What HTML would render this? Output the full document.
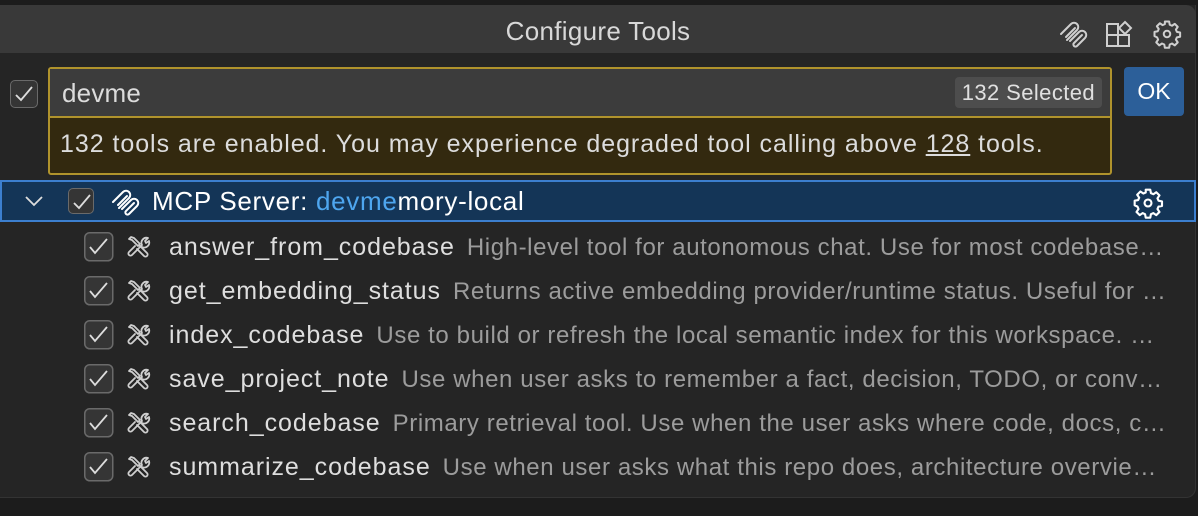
<!DOCTYPE html>
<html><head><style>
body{margin:0;width:1198px;height:516px;background:#1c1c1c;font-family:"Liberation Sans",sans-serif;overflow:hidden;position:relative}
.panel{position:absolute;left:0;top:5px;width:1195px;height:492px;background:#252525;border-radius:0 0 10px 0;border-right:1px solid #333;border-bottom:1px solid #333}
.title{position:absolute;left:0;top:5px;width:1196px;height:48px;background:#393939;border-radius:0 10px 0 0}
.title span{position:absolute;left:0;width:1196px;text-align:center;top:11px;color:#d8d8d8;font-size:26px;letter-spacing:0.3px}
.ab{position:absolute;color:#cfcfcf}
.cb{position:absolute;width:26px;height:26px;border:1.5px solid #6a6a6a;border-radius:5px;background:#353535;box-sizing:border-box}
.cb svg{position:absolute;left:3px;top:4px}
.input{position:absolute;left:48px;top:67px;width:1064px;height:108px;border:2px solid #b0932c;box-sizing:border-box;border-radius:3px;background:#33290f}
.inp{position:absolute;left:0;top:0;right:0;height:47px;background:#3c3c3c;border-bottom:2px solid #b0932c}
.inp .t{position:absolute;left:12px;top:9px;font-size:26px;letter-spacing:0.2px;color:#dcdcdc}
.badge{position:absolute;right:8px;top:8px;height:31px;background:#4d4d4d;border-radius:4px;color:#e0e0e0;font-size:22px;letter-spacing:0.4px;line-height:31px;padding:0 7px}
.warn{position:absolute;left:10px;top:61px;font-size:25px;letter-spacing:0.95px;color:#dcdcdc;white-space:nowrap}
.ok{position:absolute;left:1124px;top:67px;width:60px;height:49px;background:#2c5f99;border-radius:4px;color:#fff;font-size:23px;text-align:center;line-height:49px}
.sel{position:absolute;left:0;top:180px;width:1196px;height:42px;background:#143557;border:2px solid #3c7fcf;box-sizing:border-box}
.row{position:absolute;left:0;width:1170px;height:44px;white-space:nowrap;overflow:hidden;text-overflow:ellipsis;font-size:24px;letter-spacing:0.6px;line-height:44px;padding-left:169px;box-sizing:border-box;color:#9c9c9c}
.row b{font-weight:normal;color:#dedede;margin-right:12px;font-size:25px;letter-spacing:0.95px}
</style></head><body>
<div class="panel"></div>
<div class="title"><span>Configure Tools</span>
<svg class="ab" style="left:1057px;top:13px" width="32" height="32" viewBox="0 0 32 32" fill="none" stroke="#cfcfcf" stroke-width="2" stroke-linecap="round" stroke-linejoin="round"><path d="M4 16 L14 6 a4 4 0 0 1 6 6 L10 22 M9 19 L18 10 M13 23 L22 14 a4 4 0 0 1 6 6 L20 28 a2 2 0 0 1 -3 -3 L25 17"/></svg>
<svg class="ab" style="left:1104px;top:14px" width="32" height="32" viewBox="0 0 32 32" fill="none" stroke="#cfcfcf" stroke-width="2"><rect x="3" y="5" width="11" height="11"/><rect x="3" y="16" width="11" height="11"/><rect x="14" y="16" width="11" height="11"/><path d="M21 3 L27 9 L21 15 L15 9 Z"/></svg>
<svg class="ab" style="left:1152px;top:14px" width="30" height="30" viewBox="0 0 24 24" fill="none" stroke="#cfcfcf" stroke-width="1.6" stroke-linejoin="round"><path d="M10.3 2h3.4l.5 2.6 1.8.8 2.2-1.5 2.4 2.4-1.5 2.2.8 1.8 2.6.5v3.4l-2.6.5-.8 1.8 1.5 2.2-2.4 2.4-2.2-1.5-1.8.8-.5 2.6h-3.4l-.5-2.6-1.8-.8-2.2 1.5-2.4-2.4 1.5-2.2-.8-1.8L2 13.7v-3.4l2.6-.5.8-1.8-1.5-2.2 2.4-2.4 2.2 1.5 1.8-.8z"/><circle cx="12" cy="12" r="2.6"/></svg>
</div>
<div class="cb" style="left:10px;top:80px;width:28px;height:28px"><svg width="20" height="18" viewBox="0 0 20 18"><path d="M2 10 L7 15 L18 2" fill="none" stroke="#ddd" stroke-width="1.8"/></svg></div>
<div class="input"><div class="inp"><span class="t">devme</span><span class="badge">132 Selected</span></div>
<div class="warn">132 tools are enabled. You may experience degraded tool calling above <u>128</u> tools.</div></div>
<div class="ok">OK</div>
<div class="sel"></div>
<svg style="position:absolute;left:24px;top:194px" width="20" height="14" viewBox="0 0 20 14"><path d="M2 3 L10 11 L18 3" fill="none" stroke="#ddd" stroke-width="1.8"/></svg>
<div class="cb" style="left:68px;top:188px"><svg width="20" height="18" viewBox="0 0 20 18"><path d="M2 10 L7 15 L18 2" fill="none" stroke="#ddd" stroke-width="1.8"/></svg></div>
<svg style="position:absolute;left:109px;top:186px" width="32" height="32" viewBox="0 0 32 32" fill="none" stroke="#fff" stroke-width="2" stroke-linecap="round" stroke-linejoin="round"><path d="M4 16 L14 6 a4 4 0 0 1 6 6 L10 22 M9 19 L18 10 M13 23 L22 14 a4 4 0 0 1 6 6 L20 28 a2 2 0 0 1 -3 -3 L25 17"/></svg>
<div style="position:absolute;left:152px;top:186px;font-size:26px;letter-spacing:0.7px;color:#fff">MCP Server: <span style="color:#4ea6ef">devme</span>mory-local</div>
<svg style="position:absolute;left:1132px;top:187px" width="32" height="32" viewBox="0 0 24 24" fill="none" stroke="#fff" stroke-width="1.6" stroke-linejoin="round"><path d="M10.3 2h3.4l.5 2.6 1.8.8 2.2-1.5 2.4 2.4-1.5 2.2.8 1.8 2.6.5v3.4l-2.6.5-.8 1.8 1.5 2.2-2.4 2.4-2.2-1.5-1.8.8-.5 2.6h-3.4l-.5-2.6-1.8-.8-2.2 1.5-2.4-2.4 1.5-2.2-.8-1.8L2 13.7v-3.4l2.6-.5.8-1.8-1.5-2.2 2.4-2.4 2.2 1.5 1.8-.8z"/><circle cx="12" cy="12" r="2.6"/></svg>

<div class="row" style="top:225px"><b>answer_from_codebase</b>High-level tool for autonomous chat. Use for most codebase questions and more</div>
<div class="row" style="top:269px"><b>get_embedding_status</b>Returns active embedding provider/runtime status. Useful for debugging and more</div>
<div class="row" style="top:313px"><b>index_codebase</b>Use to build or refresh the local semantic index for this workspace. Call when needed</div>
<div class="row" style="top:357px"><b>save_project_note</b>Use when user asks to remember a fact, decision, TODO, or convention for later</div>
<div class="row" style="top:401px"><b>search_codebase</b>Primary retrieval tool. Use when the user asks where code, docs, config live</div>
<div class="row" style="top:445px"><b>summarize_codebase</b>Use when user asks what this repo does, architecture overview, key modules</div>

<svg style="position:absolute;left:0;top:0" width="1198" height="516">
<defs><g id="c"><rect x="0.75" y="0.75" width="28" height="28" rx="5" fill="#353535" stroke="#6a6a6a" stroke-width="1.5"/><path d="M6 15 L11 21 L23 7" fill="none" stroke="#ddd" stroke-width="1.8"/></g>
<g id="w" fill="none" stroke="#cfcfcf" stroke-width="1.8" stroke-linecap="round" stroke-linejoin="round"><path d="M3 5 L5 3 L8 4 L14 10 L12 12 L6 6 Z"/><path d="M12 15 L6 21 a2 2 0 0 1 -3 -3 L9 12"/><path d="M14 12 L21 19 a2 2 0 0 1 -3 3 L11 15"/><path d="M13 14 L16 11 a5 5 0 0 1 6 -7 L19 7 L20 9 L23 7 a5 5 0 0 1 -7 6"/></g></defs>
<use href="#c" x="84" y="232"/><use href="#w" x="126" y="234"/>
<use href="#c" x="84" y="276"/><use href="#w" x="126" y="278"/>
<use href="#c" x="84" y="320"/><use href="#w" x="126" y="322"/>
<use href="#c" x="84" y="364"/><use href="#w" x="126" y="366"/>
<use href="#c" x="84" y="408"/><use href="#w" x="126" y="410"/>
<use href="#c" x="84" y="452"/><use href="#w" x="126" y="454"/>
</svg>
</body></html>
